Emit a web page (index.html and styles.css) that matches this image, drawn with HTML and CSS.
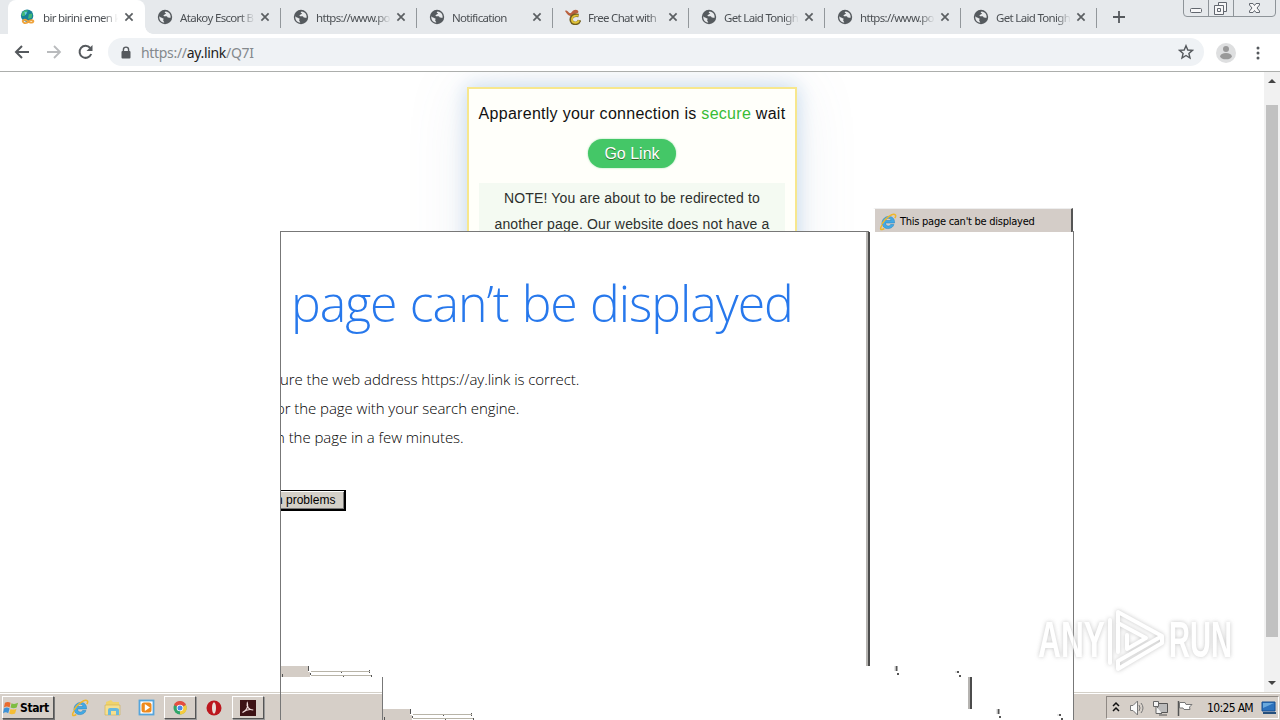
FILE: index.html
```html
<!DOCTYPE html>
<html lang="en">
<head>
<meta charset="utf-8">
<title>bir birini emen</title>
<link rel="stylesheet" href="styles.css">
</head>
<body>
<svg class="defs" width="0" height="0">
  <symbol id="globe" viewBox="0 0 16 16"><circle cx="8" cy="8" r="7.2" fill="#555a5e"/><path d="M2.3 7.2 C3.2 8.7 4.7 8.1 5.6 9.2 C6.8 9.2 7.1 10.2 6 11.1 L7.3 13.6 C4 13.3 2 10.7 2.3 7.2Z M8.7 2.4 C7.3 3 7.5 4.2 9 4.1 C9 5.6 7 5.4 6.4 6.7 C7.5 7.9 9.5 6.7 10.3 7.8 C10.8 9.2 12.4 8.3 13.6 8.8 C14.1 5.4 12 2.7 8.7 2.4Z" fill="#e8eaec"/></symbol>
  <symbol id="close" viewBox="0 0 10 10"><path d="M1.4 1.4 L8.6 8.6 M8.6 1.4 L1.4 8.6" stroke="#5b5f62" stroke-width="1.7"/></symbol>
  <symbol id="ie" viewBox="0 0 18 18"><path d="M14.9 11.5 C13.7 15.9 7.4 17 4.4 13.7 C1.3 10.2 3.6 4.5 8.6 3.5 C13 2.8 16 5.8 15.5 10 H6.4 C6.6 13.4 10.6 14 11.6 11.5Z M6.6 7.5 H12 C11.6 4.6 7.4 4.6 6.6 7.5Z" fill="#42a9e5" fill-rule="evenodd" stroke="#2380bd" stroke-width=".5"/><path d="M3.3 11.6 C.4 16 1.4 18 5.3 15.5 M3 10.8 C6 5 14.2-.5 16.4 2 C17.1 2.9 16.5 4.1 15.8 5.2" fill="none" stroke="#efb72b" stroke-width="1.5"/></symbol>
</svg>
<div class="browser">
  <header class="tabstrip">
    <div class="tab active">
      <svg class="favicon" viewBox="0 0 18 18"><circle cx="8" cy="7.5" r="7" fill="#188099"/><path d="M2.5 4 C5 1 8 1 9 2 L7 5 L5 8 L2 8Z M10 6 L14 5 L13 10 L9 11Z" fill="#42b878"/><path d="M5 3 L8 4 L6 7Z" fill="#69cbed"/><path d="M3 13.5 C5 10.5 8 13 9 14 S14 16.5 15 14.3 S11 11.6 9.5 14 S4 17 3 13.5Z" fill="none" stroke="#efa23a" stroke-width="2"/></svg>
      <span class="title">bir birini emen k</span><svg class="close"><use href="#close"/></svg>
    </div>
    <div class="tab"><svg class="favicon"><use href="#globe"/></svg><span class="title">Atakoy Escort B</span><svg class="close"><use href="#close"/></svg></div>
    <div class="tab"><svg class="favicon"><use href="#globe"/></svg><span class="title">https://www.po</span><svg class="close"><use href="#close"/></svg></div>
    <div class="tab"><svg class="favicon"><use href="#globe"/></svg><span class="title">Notification</span><svg class="close"><use href="#close"/></svg></div>
    <div class="tab"><svg class="favicon" viewBox="0 0 16 16"><path d="M0 2 C3 0 3 5 6 4 C8 0 13-.5 13.5 3 C13 5 10 4 8.5 6.5 C5.5 8 3 7 0 2Z" fill="#b9603e"/><path d="M13.6 6.5 C8 5.5 5.5 8 6.4 11.7 C7.4 15.3 13.3 15.6 14.5 11.2" fill="none" stroke="#715f20" stroke-width="3.5"/><path d="M13.4 6.7 C8.5 6 6.4 8.3 7 11.6 C8 14.5 12.8 14.5 14 11.4" fill="none" stroke="#e2c334" stroke-width="1.8"/></svg><span class="title">Free Chat with</span><svg class="close"><use href="#close"/></svg></div>
    <div class="tab"><svg class="favicon"><use href="#globe"/></svg><span class="title">Get Laid Tonigh</span><svg class="close"><use href="#close"/></svg></div>
    <div class="tab"><svg class="favicon"><use href="#globe"/></svg><span class="title">https://www.po</span><svg class="close"><use href="#close"/></svg></div>
    <div class="tab"><svg class="favicon"><use href="#globe"/></svg><span class="title">Get Laid Tonigh</span><svg class="close"><use href="#close"/></svg></div>
    <svg class="newtab" viewBox="0 0 14 14"><path d="M7 1 V13 M1 7 H13" stroke="#55595d" stroke-width="1.8"/></svg>
    <svg class="winbuttons" viewBox="0 0 93 18"><path d="M.5 0 V13 Q.5 16.5 4 16.5 H89 Q92.5 16.5 92.5 13 V0 M25.5 0 V16 M50.5 0 V16" fill="none" stroke="#8e9499"/><g fill="#f7f7f8" stroke="#62676f"><rect x="7.5" y="8.5" width="11" height="4" rx="1"/><path d="M35.5 2.5 H43.5 V11.5 H35.5Z"/><path d="M31.5 5.5 H40.5 V14.5 H31.5Z M34.5 8.5 H37.5 V11.5 H34.5Z"/><path d="M66.5 3.5 H70 L71.5 5.5 L73 3.5 H76.5 V5 L74 8 L76.5 11 V12.5 H73 L71.5 10.5 L70 12.5 H66.5 V11 L69 8 L66.5 5Z"/></g></svg>
  </header>
  <div class="toolbar">
    <svg class="nav" viewBox="0 0 96 38"><path d="M29 18 H16 M22 12 L16 18 L22 24" fill="none" stroke="#55595d" stroke-width="2"/><path d="M47 18 H60 M54 12 L60 18 L54 24" fill="none" stroke="#b9bbbd" stroke-width="1.8"/><path d="M91.2 20 A6 6 0 1 1 90.2 14" fill="none" stroke="#55595d" stroke-width="2"/><path d="M92.5 11 V17 H86.5Z" fill="#55595d"/></svg>
    <div class="omnibox">
      <svg class="lock" viewBox="0 0 10 13"><path d="M2.4 6 V3.7 A2.6 2.6 0 0 1 7.6 3.7 V6" fill="none" stroke="#55595d" stroke-width="1.4"/><rect x=".5" y="5" width="9" height="7.5" rx="1" fill="#55595d"/></svg>
      <span class="url">https://<b>ay.link</b>/Q7I</span>
      <svg class="star" viewBox="0 0 16 16"><path d="M8 1.7 L9.8 6 L14.4 6.4 L10.9 9.4 L12 14 L8 11.5 L4 14 L5.1 9.4 L1.6 6.4 L6.2 6Z" fill="none" stroke="#55595d" stroke-width="1.4"/></svg>
    </div>
    <svg class="profile" viewBox="0 0 20 20"><circle cx="10" cy="10" r="10" fill="#dedfe0"/><circle cx="10" cy="6" r="3" fill="#999"/><ellipse cx="10" cy="13.2" rx="5.8" ry="3.1" fill="#999"/></svg>
    <svg class="more" viewBox="0 0 4 14"><g fill="#55595d"><circle cx="2" cy="2" r="1.5"/><circle cx="2" cy="7" r="1.5"/><circle cx="2" cy="12" r="1.5"/></g></svg>
  </div>
  <main class="content">
    <div class="page">
      <section class="card">
        <p class="status">Apparently your connection is <em>secure</em> wait</p>
        <button class="go"><span>Go Link</span></button>
        <p class="note"><span>NOTE! You are about to be redirected to</span><span>another page. Our website does not have a</span></p>
      </section>
    </div>
    <div class="scrollbar"><i class="up"></i><i class="thumb"></i><i class="down"></i></div>
  </main>
  <footer class="taskbar">
    <div class="start"><svg viewBox="0 0 18 17"><path d="M2 3 Q5 1 8 3 L7 8 Q4 6 1 8Z" fill="#e96b2d"/><path d="M9 3.5 Q12 5 16 3 L14.5 8 Q11 9.5 8 8Z" fill="#7dbd42"/><path d="M1 9 Q4 7 7 9 L5.5 14 Q3 12 0 14Z" fill="#3c91d6"/><path d="M8 9.5 Q11 11 14.3 9.3 L12.8 14.3 Q9 16 6.5 14.3Z" fill="#f5bd34"/></svg><b>Start</b></div>
    <svg class="launch ie"><use href="#ie"/></svg>
    <svg class="launch folder" viewBox="0 0 18 18"><path d="M2 3 L7 1 L9 3 H15 V8 H2Z" fill="#efd36b"/><path d="M1 6 H16 V16 H1Z" fill="#f5df8e" stroke="#cfae50" stroke-width=".6"/><path d="M4 16 V11 Q4 9 6 9 H12 Q15 9 15 11 V16 H12 V12 H7 V16Z" fill="#67b9dd"/></svg>
    <svg class="launch media" viewBox="0 0 18 18"><rect x="1.5" y="1.5" width="14" height="14" fill="#fff" stroke="#56a5dc" stroke-width="1.8"/><rect x="3.5" y="3.5" width="10" height="10" rx="2.5" fill="#ef8a1d"/><path d="M6.8 5 L12 8.5 L6.8 12Z" fill="#fff"/></svg>
    <div class="task chrome"><svg viewBox="0 0 16 16"><circle cx="8" cy="8" r="6.5" fill="#2fa568"/><path d="M2 5 A6.5 6.5 0 0 1 14 5 L8 8Z" fill="#e54d41"/><path d="M8 8 L14 5 A6.5 6.5 0 0 1 8 14.5Z" fill="#f6cb3d"/><circle cx="8" cy="8" r="3.3" fill="#fff"/><circle cx="8" cy="8" r="2.5" fill="#4a88e8"/></svg></div>
    <svg class="launch opera" viewBox="0 0 18 18"><ellipse cx="9" cy="9" rx="7.5" ry="7.5" fill="#bc171e"/><ellipse cx="9" cy="9" rx="2" ry="5.8" fill="#e9dfda"/></svg>
    <div class="task acrobat"><svg viewBox="0 0 16 16"><rect width="16" height="16" fill="#3d1215"/><path d="M2.5 12.5 C7 10.5 8.5 6 7.3 3 C6.3 6.5 9 10 13.2 10 C10 9 6 9.7 2.5 12.5Z" fill="none" stroke="#f2dddd" stroke-width="1.2"/></svg></div>
    <div class="tray">
      <svg viewBox="0 0 100 24"><path d="M6 10 L9 7 L12 10 M6 15 L9 12 L12 15" fill="none" stroke="#111" stroke-width="1.5"/><path d="M23.5 9.5 H26 L30.5 5 V19 L26 14.5 H23.5Z" fill="#fafafa" stroke="#777"/><path d="M32 9 Q34 12 32 15 M34 7 Q38 12 34 17" fill="none" stroke="#777"/><path d="M50.5 7.5 H60.5 V16.5 H50.5Z M52 19 H60" fill="#bbb" stroke="#555"/><path d="M46.5 5.5 H51.5 V10.5 H46.5Z M49 10 V17.5 H55" fill="#f4f4f4" stroke="#666"/><path d="M71.5 5 V20" stroke="#555" stroke-width="1.5"/><path d="M72.5 6.5 H78 L79 8.5 H85 L82.5 11 L83 13.5 H77 L76 12 H72.5Z" fill="#fff" stroke="#777"/></svg>
      <span class="clock">10:25 AM</span>
      <svg class="desktop" viewBox="0 0 16 14"><path d="M1 1 H14 V10 H1Z" fill="#2d72bd" stroke="#164f91"/><path d="M2 2 H13 L2 7Z" fill="#6aa9dd"/><path d="M2 12 H15" stroke="#244f7c" stroke-width="2"/></svg>
    </div>
  </footer>
</div>

<div class="iewindow">
  <h1>page can’t be displayed</h1>
  <div class="tips"><p class="t1">ure the web address https://ay.link is correct.</p><p class="t2">or the page with your search engine.</p><p class="t3">n the page in a few minutes.</p></div>
  <div class="fix"><i>n</i> problems</div>
</div>
<div class="lowerwindow"></div>
<div class="ietab"><svg><use href="#ie"/></svg><span>This page can't be displayed</span></div>
<svg class="traces" viewBox="0 0 1280 720">
  <path d="M280.5 231 V720 M1073.5 231 V720 M382.5 677 V720" stroke="#777"/>
  <path d="M280 231.5 H869 M1072 231.5 H1074" stroke="#777"/>
  <path d="M867 232 V666 M969 677 V709" stroke="#b6b4b1" stroke-width="2"/>
  <path d="M869 232 V666 M971 677 V709" stroke="#4c4c4c" stroke-width="2"/>
  <g id="fragment"><path d="M281 666 H308 V672 H310 V677 H281Z" fill="#d4cdc6"/><path d="M308.5 666 V671 M282.5 674 V677 M310.5 673 V675 M341.5 671 V673 M369.5 670 V673 M343.5 675 V677 M371.5 675 V677" stroke="#555"/><path d="M311 671.5 H370 M311 675.5 H371" stroke="#b8b4a8"/><path d="M896.5 666 V671 M898 673 V675 M958 671 V673 M960 675 V677" stroke="#555" stroke-width="2"/><path d="M895 666 V671 M956 671 V673" stroke="#ccc"/></g>
  <use href="#fragment" transform="translate(102 43)"/>
</svg>
<svg class="watermark" viewBox="0 0 200 66">
  <g class="mark"><text x="2" y="49" textLength="67" lengthAdjust="spacingAndGlyphs">ANY</text><text x="133" y="49" textLength="63" lengthAdjust="spacingAndGlyphs">RUN</text><path d="M74 12 V55 M82 44 V4 L126 28 L82 53 M82 15 L110 30 L91 41 V27 M82 53 V61 L126 35 V28"/></g>
</svg>
</body>
</html>
```
FILE: styles.css
```css
* { box-sizing: border-box; }
body { margin: 0; width: 1280px; height: 720px; overflow: hidden; background: #fff; font-family: "Liberation Sans", sans-serif; }
p, h1 { margin: 0; }
svg { display: block; flex: none; }
.defs { position: absolute; }
.browser { height: 720px; display: flex; flex-direction: column; }
.tabstrip { height: 34px; flex: none; background: #e6e9ec; display: flex; align-items: stretch; padding-left: 8px; }
.tab { width: 136px; display: flex; align-items: center; padding-left: 12px; border-right: 1px solid transparent; background: linear-gradient(#92979b, #92979b) right 8px / 1px 20px no-repeat; background-origin: border-box; flex: none; }
.tab.active { width: 137px; background: #fff; border: 0; border-radius: 8px 8px 0 0; position: relative; }
.tab.active::after { content: ""; position: absolute; left: 137px; bottom: 0; width: 8px; height: 8px; background: radial-gradient(circle at 8px 0, transparent 7.5px, #fff 8px); }
.favicon { width: 16px; height: 16px; margin-right: 7px; }
.title { width: 75px; white-space: nowrap; font: 11.5px "Noto Sans", sans-serif; letter-spacing: -.68px; color: #4c5054; -webkit-mask-image: linear-gradient(90deg, #000 80%, transparent 100%); mask-image: linear-gradient(90deg, #000 80%, transparent 100%); }
.close { width: 10px; height: 10px; margin-left: 5px; }
.tab.active .close { margin-left: 6px; }
.newtab { width: 14px; height: 14px; margin: 10px 0 0 15px; }
.winbuttons { width: 93px; height: 18px; margin-left: 57px; }
.toolbar { height: 38px; flex: none; display: flex; align-items: center; background: #fff; border-bottom: 1px solid #acaeac; }
.nav { width: 96px; height: 38px; }
.omnibox { width: 1096px; height: 28px; margin: 0 12px 1px; border-radius: 14px; background: #eff2f5; display: flex; align-items: center; padding: 0 10px 0 13px; }
.lock { width: 10px; height: 13px; }
.url { margin-left: 10px; flex: 1; font: 14px "Noto Sans", sans-serif; letter-spacing: -.32px; color: #84898d; }
.url b { font-weight: normal; color: #222; }
.star { width: 16px; height: 16px; }
.profile { width: 20px; height: 20px; }
.more { width: 4px; height: 14px; margin-left: 20px; }
.content { height: 620px; flex: none; display: flex; overflow: hidden; }
.page { width: 1264px; display: flex; justify-content: center; align-items: flex-start; padding-top: 15px; }
.card { width: 330px; height: 300px; border: 2px solid #f7e78d; background: #fffffa; box-shadow: 0 0 18px #c4d9ee, 0 0 60px rgba(110,125,150,.12); padding: 15px 9px; display: flex; flex-direction: column; align-items: center; }
.status { font-size: 16px; line-height: 20px; white-space: nowrap; letter-spacing: .28px; color: #111; }
.status em { font-style: normal; color: #38bc36; }
.go { width: 88px; height: 29px; margin-top: 15px; border: 0; padding: 0; border-radius: 15px; background: #44c767; color: #fff; font: 16px "Liberation Sans", sans-serif; text-shadow: 0 1px 0 #2f6627; box-shadow: 0 0 2px #44c76799; }
.note { width: 306px; flex: 1; margin-top: 15px; background: #f4faf2; padding-top: 2px; display: flex; flex-direction: column; align-items: center; font-size: 14px; line-height: 26px; letter-spacing: .16px; color: #2d302d; white-space: nowrap; }
.scrollbar { width: 16px; background: #f1f1f1; display: flex; flex-direction: column; align-items: center; }
.up, .down { border: 4px solid transparent; }
.up { border-bottom-color: #444; border-top: 0; margin-top: 7px; }
.thumb { width: 12px; height: 532px; background: #c1c1c1; margin-top: 22px; }
.down { border-top-color: #444; border-bottom: 0; margin-top: 44px; }
.taskbar { height: 28px; flex: none; background: #d6cfc8; border-top: 1px solid #d4d0c8; box-shadow: inset 0 1px #fff; display: flex; align-items: center; padding: 2px 0 0 2px; }
.start { width: 52px; height: 23px; display: flex; align-items: center; border: 1px solid #fff; border-right-color: #555; border-bottom-color: #555; box-shadow: 1px 1px #777; font: 12px "DejaVu Sans Condensed", "DejaVu Sans", sans-serif; letter-spacing: -.4px; }
.start svg { width: 17px; height: 16px; }
.launch { width: 18px; height: 18px; }
.ie { margin-left: 17px; }
.folder { margin-left: 15px; }
.media { margin-left: 16px; }
.task { width: 32px; height: 23px; border: 1px solid #fff; border-right-color: #555; border-bottom-color: #555; box-shadow: 1px 1px #999; display: flex; align-items: center; justify-content: center; }
.task svg { width: 16px; height: 16px; }
.chrome { margin-left: 8px; }
.opera { margin-left: 9px; }
.acrobat { margin-left: 9px; }
.tray { width: 173px; height: 23px; margin-left: auto; margin-right: 1px; border: 1px solid #8f8984; border-right-color: #fff; border-bottom-color: #fff; display: flex; align-items: center; }
.tray svg { width: 100px; height: 24px; }
.clock { width: 54px; font: 12px "DejaVu Sans Condensed", "DejaVu Sans", sans-serif; letter-spacing: -.65px; white-space: nowrap; }
.tray .desktop { width: 16px; height: 14px; }
.iewindow { position: absolute; left: 280px; top: 231px; width: 794px; height: 446px; background: #fff; overflow: hidden; display: flex; flex-direction: column; align-items: flex-start; }
.iewindow h1 { margin: 37px 0 0 11px; font: 300 50px/70px "Open Sans", "Noto Sans", sans-serif; letter-spacing: -1.05px; word-spacing: 1.4px; color: #2778ec; white-space: nowrap; }
.tips { margin-top: 27px; font: 300 15px/29px "Open Sans", "Noto Sans", sans-serif; letter-spacing: -.06px; color: #000; white-space: nowrap; }
.t2 { margin-left: -4px; }
.t3 { margin-left: -4px; }
.fix { width: 68px; height: 21px; margin: 38px 0 0 -2px; border: 1px solid #000; border-right-width: 2px; border-bottom-width: 2px; background: #d4d0c8; box-shadow: inset 1px 1px #fff, inset -1px -1px #777; font-size: 12px; line-height: 18px; white-space: nowrap; }
.fix i { font-style: normal; margin-left: -3px; }
.lowerwindow { position: absolute; left: 382px; top: 677px; width: 692px; height: 43px; background: #fff; }
.ietab { position: absolute; left: 873px; top: 208px; width: 200px; height: 24px; background: #d4cdc8; border-top: 1px solid #eee; border-left: 2px solid #fff; border-right: 2px solid #555; display: flex; align-items: center; padding: 2px 0 0 4px; font: 11px "DejaVu Sans Condensed", "DejaVu Sans", sans-serif; letter-spacing: -.26px; white-space: nowrap; }
.ietab svg { width: 18px; height: 18px; margin-right: 3px; }
.traces { position: absolute; left: 0; top: 0; width: 1280px; height: 720px; }
.watermark { position: absolute; left: 1036px; top: 608px; width: 200px; height: 66px; opacity: .85; filter: drop-shadow(0 0 2px #bbb); }
.mark { fill: #fff; font: bold 50px "Liberation Sans", sans-serif; }
.mark path { fill: none; stroke: #fff; stroke-width: 4; stroke-linejoin: round; stroke-linecap: round; }
```
